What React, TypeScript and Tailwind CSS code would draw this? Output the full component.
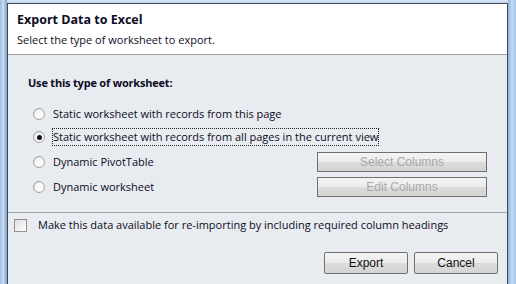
import React from 'react'

const font = { fontFamily: '"Open Sans", "DejaVu Sans", sans-serif' }

function Radio({ checked }: { checked?: boolean }) {
  return (
    <span className="relative flex h-[12px] w-[12px] shrink-0 items-center justify-center rounded-full border border-[#a5a5a5] bg-gradient-to-br from-[#d8d8d8] to-white">
      <span className="flex h-[8px] w-[8px] items-center justify-center rounded-full bg-gradient-to-br from-[#f4f4f4] to-white">
        {checked && <span className="h-[5px] w-[5px] rounded-full bg-[#111]" />}
      </span>
    </span>
  )
}

function Btn({ label, disabled, w }: { label: string; disabled?: boolean; w: string }) {
  return (
    <button
      className={
        'border border-[#707070] text-[12px] leading-none ' +
        w +
        (disabled ? ' h-[20px] text-[#a8a8a8]' : ' h-[22px] rounded-[2px] text-[#111]')
      }
      style={{
        fontFamily: '"Liberation Sans", Arial, sans-serif',
        background: 'linear-gradient(to bottom, #f4f4f4 0%, #ebebeb 50%, #dcdcdc 51%, #d4d4d4 100%)',
      }}
    >
      {label}
    </button>
  )
}

export default function App() {
  return (
    <div className="flex h-[284px] w-[516px] bg-[#c9ddf1]" style={font}>
      {/* window frame left */}
      <div className="w-[7px] bg-gradient-to-r from-[#9fbfe2] via-[#c8dcf2] to-[#7b9cc4]" />
      <div className="flex flex-1 flex-col">
        <div className="h-[3px] bg-gradient-to-b from-[#d6e5f5] to-[#c2d6ec]" />
        <div className="flex flex-1 flex-col border-l border-t border-r border-[#3c4a5c] bg-[#e8ebf0] text-[#0c0c24]">
          {/* header */}
          <div className="h-[51px] border-b border-[#a0a4aa] bg-white px-[9px] pt-[8px]">
            <div className="text-[12.5px] font-bold leading-[16px]">Export Data to Excel</div>
            <div className="mt-[4px] text-[11px] leading-[16px]">Select the type of worksheet to export.</div>
          </div>
          {/* options */}
          <div className="h-[158px] border-b border-[#a0a4aa] pl-[20px] pr-[20px] pt-[20px]">
            <div className="text-[11px] font-bold leading-[16px] tracking-[-0.2px]">Use this type of worksheet:</div>
            <div className="mt-[11px] flex flex-col text-[11px] leading-[16px]">
              <div className="flex h-[23px] items-center gap-[8px] pl-[5px]">
                <Radio />
                <span>Static worksheet with records from this page</span>
              </div>
              <div className="flex h-[24px] items-center gap-[7px] pl-[5px]">
                <Radio checked />
                <span className="border border-dotted border-[#222]">
                  Static worksheet with records from all pages in the current view
                </span>
              </div>
              <div className="flex h-[25px] items-center gap-[8px] pl-[5px]">
                <Radio />
                <span className="flex-1">Dynamic PivotTable</span>
                <Btn label="Select Columns" disabled w="w-[170px]" />
              </div>
              <div className="flex h-[25px] items-center gap-[8px] pl-[5px]">
                <Radio />
                <span className="flex-1">Dynamic worksheet</span>
                <Btn label="Edit Columns" disabled w="w-[170px]" />
              </div>
            </div>
          </div>
          {/* checkbox + buttons */}
          <div className="flex-1 px-[6px] pt-[4px]">
            <div className="flex items-center gap-[11px] text-[11px] leading-[16px]">
              <span className="h-[13px] w-[13px] border border-[#8f8f8f] bg-gradient-to-br from-[#dedede] to-white" />
              <span>Make this data available for re-importing by including required column headings</span>
            </div>
            <div className="mt-[19px] flex justify-end gap-[6px] pr-[3px]">
              <Btn label="Export" w="w-[84px]" />
              <Btn label="Cancel" w="w-[84px]" />
            </div>
          </div>
        </div>
      </div>
      <div className="w-[8px] bg-gradient-to-r from-[#8fb2dc] via-[#c4dbf3] to-[#a7c6ea]" />
    </div>
  )
}
